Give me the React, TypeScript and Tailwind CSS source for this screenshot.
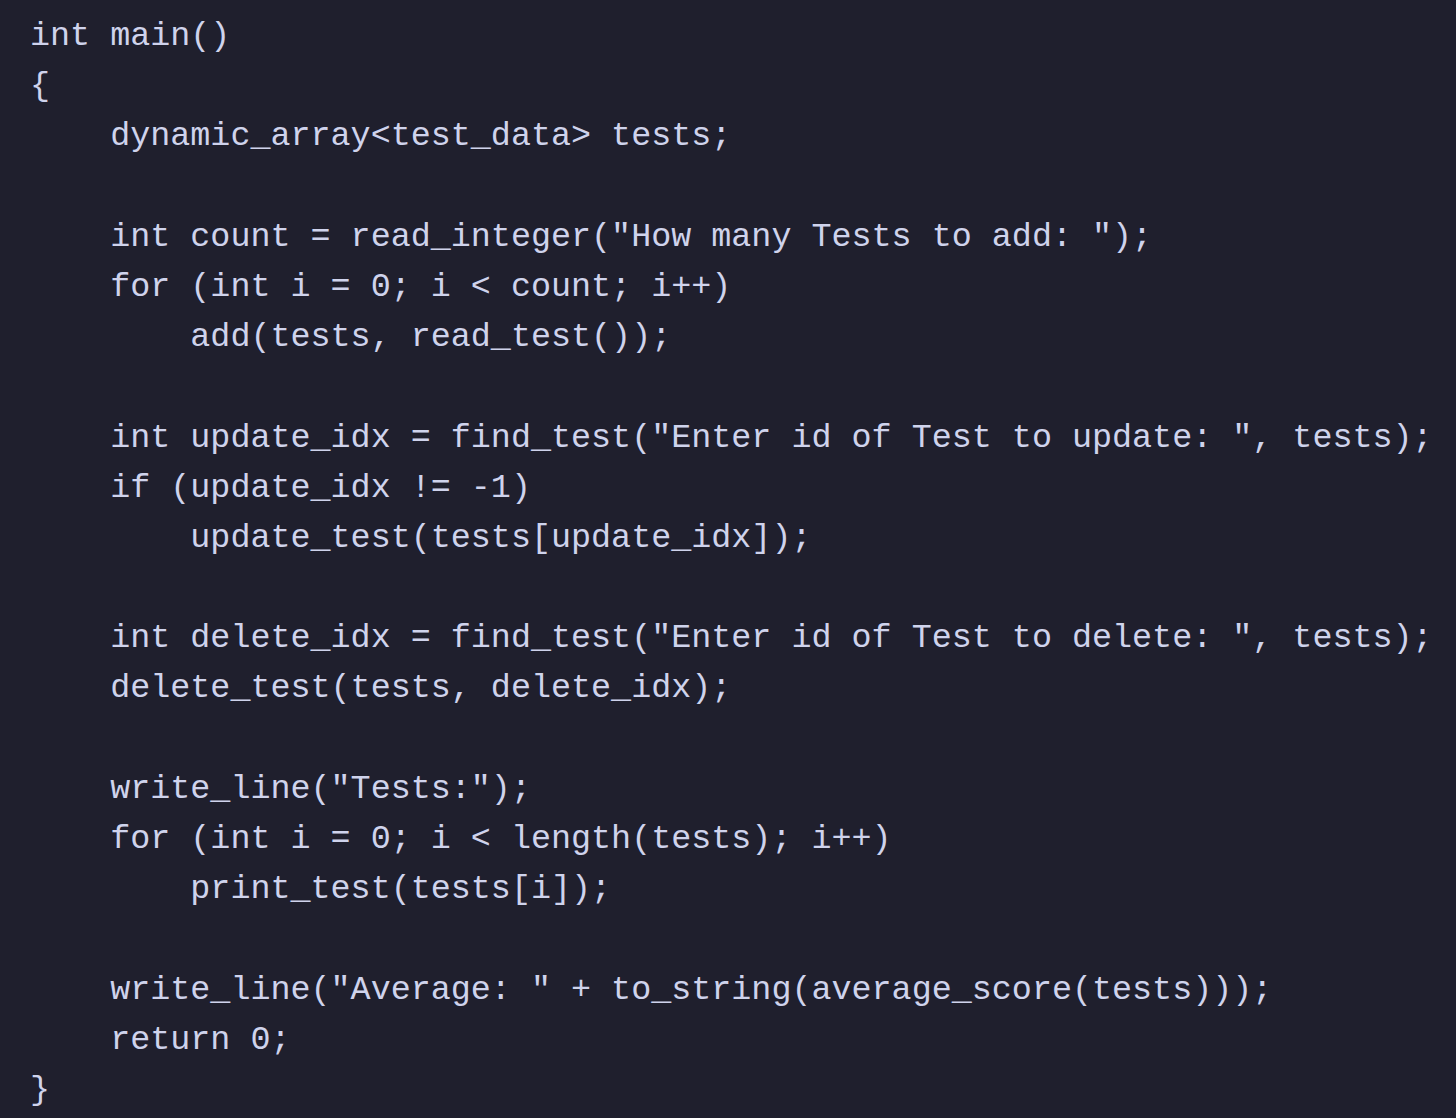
import React from "react";

const lines = [
  "int main()",
  "{",
  "    dynamic_array<test_data> tests;",
  "",
  '    int count = read_integer("How many Tests to add: ");',
  "    for (int i = 0; i < count; i++)",
  "        add(tests, read_test());",
  "",
  '    int update_idx = find_test("Enter id of Test to update: ", tests);',
  "    if (update_idx != -1)",
  "        update_test(tests[update_idx]);",
  "",
  '    int delete_idx = find_test("Enter id of Test to delete: ", tests);',
  "    delete_test(tests, delete_idx);",
  "",
  '    write_line("Tests:");',
  "    for (int i = 0; i < length(tests); i++)",
  "        print_test(tests[i]);",
  "",
  '    write_line("Average: " + to_string(average_score(tests)));',
  "    return 0;",
  "}",
];

export default function App() {
  return (
    <div className="w-[1456px] h-[1118px] bg-[#1f1f2d] overflow-hidden pl-[30px] pt-[11px]">
      <pre className="m-0 font-['Courier_New','Courier','Nimbus_Mono_PS','FreeMono','Liberation_Mono',monospace] text-[33.4px] leading-[50.2px] text-[#cfd3ec] whitespace-pre">
        {lines.map((l, i) => (
          <div key={i} className="h-[50.2px]">
            {l}
          </div>
        ))}
      </pre>
    </div>
  );
}
